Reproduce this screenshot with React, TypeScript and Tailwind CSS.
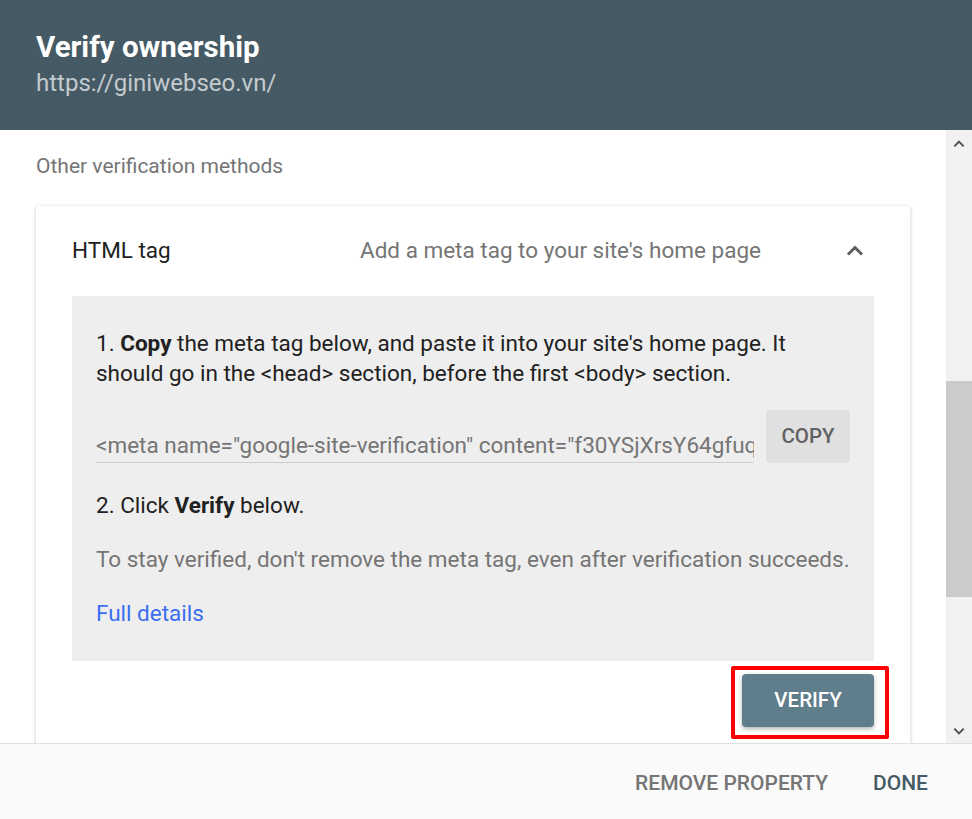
import React from "react";

function ChevronUp({ className }: { className?: string }) {
  return (
    <svg viewBox="0 0 24 24" className={className} fill="none">
      <path d="M5 15.5 12 8.5l7 7" stroke="currentColor" strokeWidth="3" />
    </svg>
  );
}

function ChevronDown({ className }: { className?: string }) {
  return (
    <svg viewBox="0 0 24 24" className={className} fill="none">
      <path d="M5 8.5l7 7 7-7" stroke="currentColor" strokeWidth="3" />
    </svg>
  );
}

export default function App() {
  return (
    <div className="w-[972px] h-[819px] flex flex-col bg-white font-['Roboto',sans-serif] overflow-hidden">
      {/* Header */}
      <header className="h-[130px] shrink-0 bg-[#465a65] px-[36px] pt-[29px]">
        <h1 className="text-[29.5px] leading-[37px] font-bold text-white">Verify ownership</h1>
        <p className="mt-[2px] text-[24px] leading-[30px] text-[#c3cbcf]">https://giniwebseo.vn/</p>
      </header>

      {/* Body */}
      <div className="flex flex-1 min-h-0">
        <main className="flex-1 overflow-hidden px-[36px] pt-[22px]">
          <p className="text-[21px] leading-[28px] text-[#757575]">Other verification methods</p>

          <div className="mt-[26px] bg-white rounded-[3px] shadow-[0_1px_4px_rgba(0,0,0,0.22)] px-[36px] pb-[40px]">
            <div className="h-[90px] flex items-center">
              <span className="w-[288px] text-[22.5px] text-[#212121]">HTML tag</span>
              <span className="flex-1 text-[22.5px] text-[#757575]">Add a meta tag to your site's home page</span>
              <ChevronUp className="w-[24px] h-[24px] mr-[7px] text-[#5f5f5f]" />
            </div>

            <div className="bg-[#eeeeee] px-[24px] pt-[32px] pb-[33px]">
              <p className="text-[22.5px] leading-[30px] text-[#212121]">
                1. <b className="font-bold">Copy</b> the meta tag below, and paste it into your site's home page. It
                should go in the &lt;head&gt; section, before the first &lt;body&gt; section.
              </p>

              <div className="mt-[22px] flex items-end gap-[12px]">
                <div className="flex-1 min-w-0 border-b border-[#cfcfcf] pb-[2px] overflow-hidden whitespace-nowrap text-[22.5px] leading-[30px] text-[#757575]">
                  &lt;meta name="google-site-verification" content="f30YSjXrsY64gfuqE2r9mQ7bL0xk1tWcHn5" /&gt;
                </div>
                <button className="w-[84px] h-[53px] shrink-0 rounded-[4px] bg-[#e0e0e0] text-[20.5px] font-medium text-[#616161]">
                  COPY
                </button>
              </div>

              <p className="mt-[27px] text-[22.5px] leading-[30px] text-[#212121]">
                2. Click <b className="font-bold">Verify</b> below.
              </p>
              <p className="mt-[24px] text-[22.5px] leading-[30px] text-[#757575]">
                To stay verified, don't remove the meta tag, even after verification succeeds.
              </p>
              <p className="mt-[24px] text-[22.5px] leading-[30px] text-[#3a6ef2]">Full details</p>
            </div>

            <div className="flex justify-end mt-[13px]">
              <div className="relative">
                <button className="w-[132px] h-[53px] rounded-[4px] bg-[#607d8b] text-white text-[20.5px] font-medium shadow-[0_2px_4px_rgba(0,0,0,0.3)]">
                  VERIFY
                </button>
                <div className="absolute -left-[11px] -top-[8px] -right-[15px] -bottom-[12px] border-[4px] border-[#ff0000] rounded-[2px]" />
              </div>
            </div>
          </div>
        </main>

        {/* Scrollbar */}
        <div className="w-[26px] shrink-0 bg-[#f1f1f1] flex flex-col items-center">
          <ChevronUp className="w-[16px] h-[16px] mt-[6px] text-[#505050]" />
          <div className="mt-[229px] w-full h-[216px] bg-[#cbcbcb]" />
          <div className="flex-1" />
          <ChevronDown className="w-[16px] h-[16px] mb-[4px] text-[#505050]" />
        </div>
      </div>

      {/* Footer */}
      <footer className="h-[76px] shrink-0 bg-[#fafafa] border-t border-[#e0e0e0] flex items-center justify-end pr-[44px] pt-[5px] gap-[45px]">
        <span className="text-[21px] font-medium text-[#757575]">REMOVE PROPERTY</span>
        <span className="text-[21px] font-medium text-[#455a64]">DONE</span>
      </footer>
    </div>
  );
}
